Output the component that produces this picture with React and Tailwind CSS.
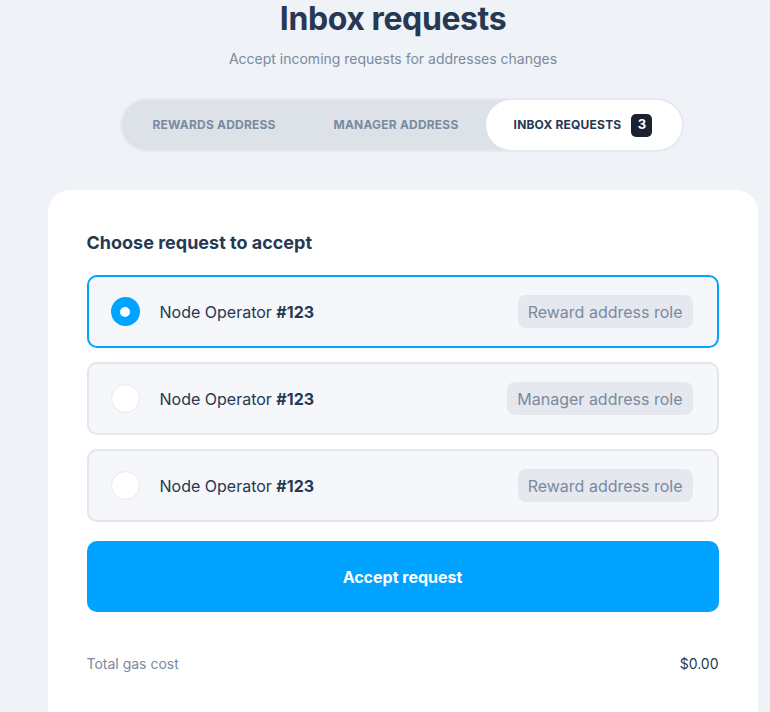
export default function App() {
  const rows = [
    { role: "Reward address role", selected: true },
    { role: "Manager address role", selected: false },
    { role: "Reward address role", selected: false },
  ];
  return (
    <div className="w-[770px] h-[712px] overflow-hidden bg-[#eff2f7] text-[#273852]" style={{ fontFamily: "Inter, 'Noto Sans', sans-serif" }}>
      <div className="w-[710px] ml-[47px] flex flex-col items-center">
        <h1 className="text-[32px] leading-[40px] font-bold tracking-[-0.4px] -ml-[18px] mt-[-1px]">Inbox requests</h1>
        <p className="mt-[10px] text-[14px] leading-[20px] text-[#7a8aa0] -ml-[18px]">Accept incoming requests for addresses changes</p>
        <div className="mt-[29px] w-[564px] h-[54px] rounded-full bg-[#dde2e9] border-2 border-[#e6eaf0] flex items-center">
          <div className="w-[184px] text-center text-[12px] font-bold text-[#7a8aa0] tracking-[0.2px]">REWARDS ADDRESS</div>
          <div className="w-[180px] text-center text-[12px] font-bold text-[#7a8aa0] tracking-[0.2px]">MANAGER ADDRESS</div>
          <div className="flex-1 h-full bg-white rounded-full flex items-center justify-center gap-[10px] pr-[2px]">
            <span className="text-[12px] font-bold text-[#273852] tracking-[0.2px]">INBOX REQUESTS</span>
            <span className="w-[21px] h-[23px] rounded-[5px] bg-[#1c2230] text-white text-[13px] font-bold flex items-center justify-center">3</span>
          </div>
        </div>
        <div className="mt-[38px] ml-[1px] w-[710px] h-[540px] bg-white rounded-[22px] px-[39px] pt-[41px]">
          <h2 className="text-[18px] leading-[24px] font-bold">Choose request to accept</h2>
          <div className="mt-[20px] flex flex-col gap-[14px]">
            {rows.map((r, i) => (
              <div key={i} className={`h-[73px] rounded-[10px] bg-[#f5f7fa] flex items-center pl-[22px] pr-[24px] border-2 ${r.selected ? "border-[#00a3ff]" : "border-[#e3e6ec]"}`}>
                {r.selected ? (
                  <span className="w-[29px] h-[29px] rounded-full bg-[#00a3ff] flex items-center justify-center">
                    <span className="w-[10px] h-[10px] rounded-full bg-white" />
                  </span>
                ) : (
                  <span className="w-[29px] h-[29px] rounded-full bg-white border border-[#e6e9ee]" />
                )}
                <span className="ml-[20px] text-[16px] text-[#273852]">
                  Node Operator <span className="font-bold">#123</span>
                </span>
                <span className="ml-auto h-[33px] px-[10px] rounded-[8px] bg-[#e5e8ee] text-[#7a8aa0] text-[16px] flex items-center">{r.role}</span>
              </div>
            ))}
          </div>
          <button className="mt-[19px] w-full h-[71px] rounded-[10px] bg-[#00a3ff] text-white text-[16px] font-bold">Accept request</button>
          <div className="mt-[41px] flex justify-between text-[14px]">
            <span className="text-[#7a8aa0]">Total gas cost</span>
            <span className="text-[#273852]">$0.00</span>
          </div>
        </div>
      </div>
    </div>
  );
}
